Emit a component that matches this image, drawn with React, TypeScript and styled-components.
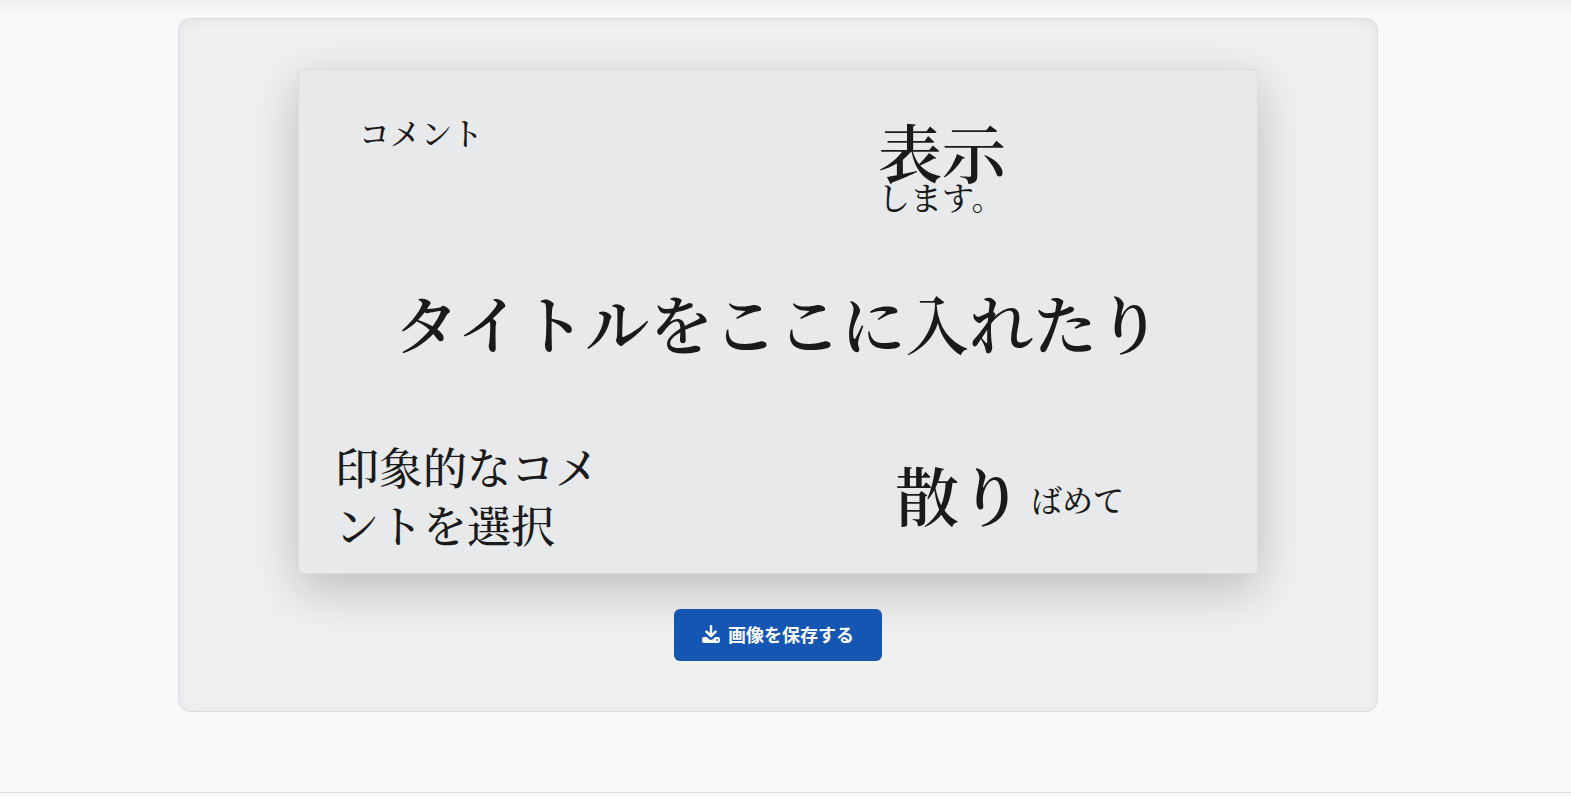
import React from 'react';
import styled, { createGlobalStyle } from 'styled-components';

const Global = createGlobalStyle`
  *, *::before, *::after { box-sizing: border-box; }
  body { margin: 0; background: #f8f9fb; color: #1a1a1a; font-family: "Noto Sans CJK JP", sans-serif; }
`;

const TopShade = styled.div`
  height: 18px;
  background: linear-gradient(#eff0f2, #f8f9fb 80%);
`;

const Content = styled.main`
  padding: 0 193px 80px 178px;
  border-bottom: 1px solid #dcdee1;
`;

const Panel = styled.section`
  padding: 50px 119px;
  background: #f0f0f0;
  border: 1px solid #d9dbde;
  border-radius: 12px;
  box-shadow: inset 0 2px 15px rgba(0, 0, 0, 0.05);
  display: flex;
  flex-direction: column;
  align-items: center;
  gap: 35px;
`;

const Canvas = styled.div`
  width: 100%;
  min-height: 505px;
  padding-bottom: 2px;
  display: grid;
  grid-template-rows: 1fr auto 1fr;
  background: #e8e9eb;
  border: 1px solid #d9dbdd;
  border-radius: 4px;
  box-shadow: 0 15px 50px rgba(0, 0, 0, 0.22);
  font-family: "Noto Serif CJK JP", "Noto Serif JP", serif;
`;

const TopRow = styled.div`
  display: flex;
  justify-content: space-between;
  align-items: flex-start;
  padding: 46px 251px 0 60px;
`;

const BottomRow = styled.div`
  align-self: end;
  display: flex;
  justify-content: space-between;
  align-items: center;
  padding: 0 133px 18px 36px;
`;

const Stack = styled.div`
  padding-top: 4px;
`;

const Inline = styled.div`
  display: flex;
  align-items: flex-end;
  gap: 8px;
  padding-bottom: 4px;
`;

const Phrase = styled.p`
  margin: 0;
  white-space: nowrap;
  font-size: 31px;
  line-height: 32px;
  font-weight: 500;
`;

const StackedPhrase = styled(Phrase)`
  font-size: 32px;
`;

const InlinePhrase = styled(Phrase)`
  line-height: 48px;
`;

const Heading = styled(Phrase)`
  font-size: 64px;
  line-height: 60px;
  font-weight: 600;
`;

const Title = styled(Heading)`
  line-height: 64px;
  text-align: center;
`;

const Impression = styled(Phrase)`
  width: 272px;
  white-space: normal;
  font-size: 44px;
  line-height: 58px;
`;

const Save = styled.button`
  height: 52px;
  padding: 0 28px 2px;
  border: 0;
  border-radius: 6px;
  background: #1656b3;
  color: #fff;
  display: flex;
  align-items: center;
  gap: 8px;
  font: 700 18px/26px "Noto Sans CJK JP", sans-serif;
  cursor: pointer;
`;

function DownloadIcon() {
  return (
    <svg width="18" height="18" viewBox="0 0 18 18" aria-hidden="true">
      <path d="M9 1v9.8M4.400 6.700L9 11.200l4.600-4.500" fill="none" stroke="#fff" strokeWidth="2.4" strokeLinecap="round" strokeLinejoin="round" />
      <path fillRule="evenodd" fill="#fff" d="M2.200 12h2.600l2.300 2.200c1.100 1 2.700 1 3.800 0l2.300-2.200h2.600A2.200 2.200 0 0 1 18 14.200v1.600a2.200 2.200 0 0 1-2.200 2.200H2.200A2.200 2.200 0 0 1 0 15.800v-1.600A2.200 2.200 0 0 1 2.200 12zM15.200 14.100a.9.9 0 1 0 0 1.800.9.9 0 0 0 0-1.800z" />
    </svg>
  );
}

export default function App() {
  return (
    <>
      <Global />
      <TopShade />
      <Content>
        <Panel>
          <Canvas>
            <TopRow>
              <Phrase>コメント</Phrase>
              <Stack>
                <Heading>表示</Heading>
                <StackedPhrase>します。</StackedPhrase>
              </Stack>
            </TopRow>
            <Title as="h1">タイトルをここに入れたり</Title>
            <BottomRow>
              <Impression>印象的なコメントを選択</Impression>
              <Inline>
                <Heading>散り</Heading>
                <InlinePhrase>ばめて</InlinePhrase>
              </Inline>
            </BottomRow>
          </Canvas>
          <Save type="button"><DownloadIcon />画像を保存する</Save>
        </Panel>
      </Content>
    </>
  );
}
